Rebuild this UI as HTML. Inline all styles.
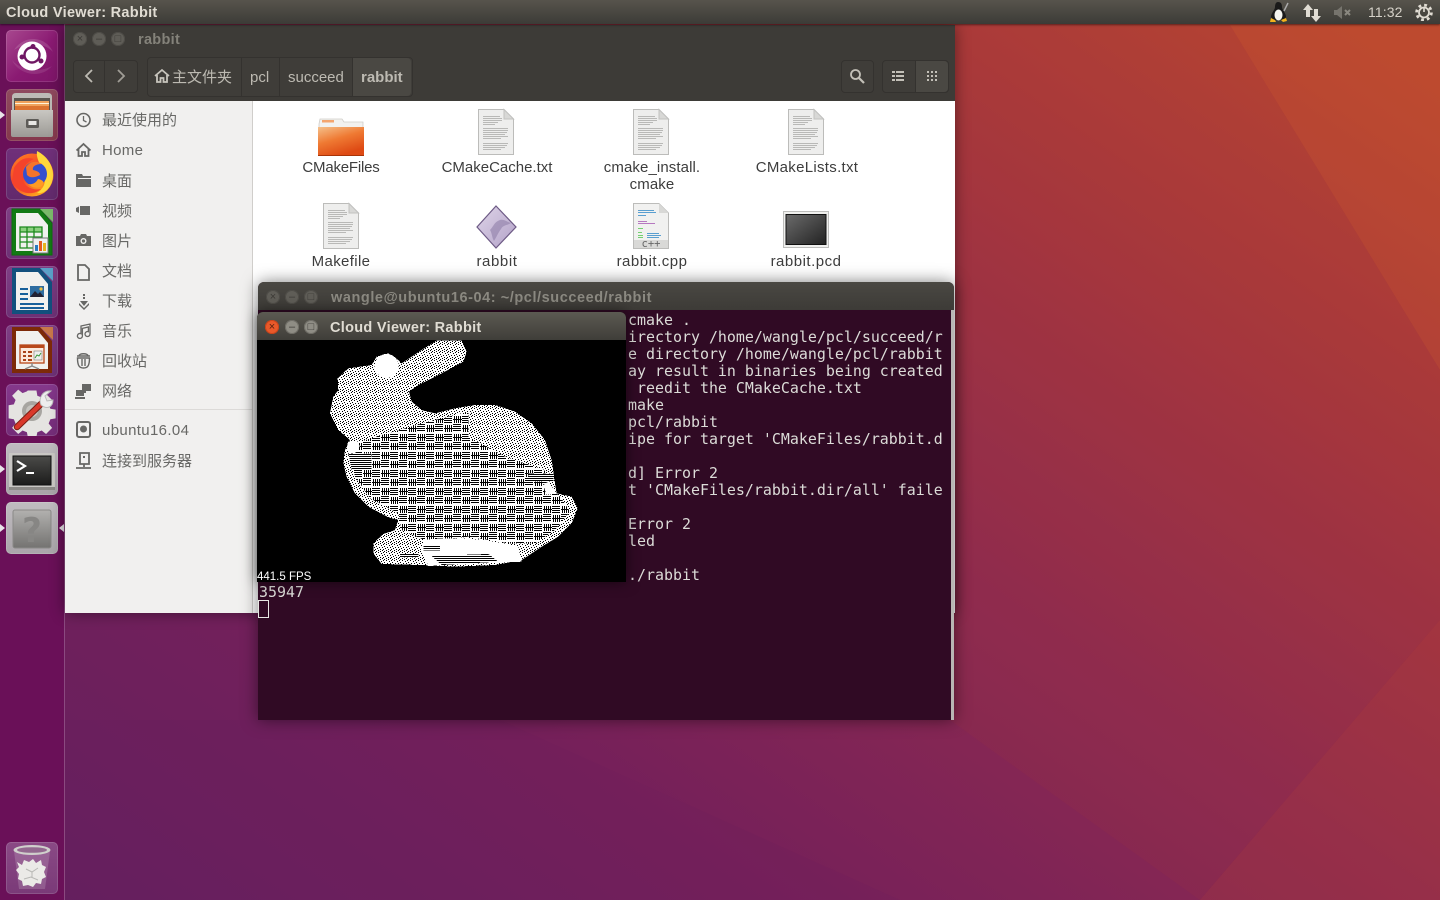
<!DOCTYPE html>
<html><head><meta charset="utf-8"><title>Cloud Viewer: Rabbit</title>
<style>
html,body{margin:0;padding:0;width:1440px;height:900px;overflow:hidden;background:#7a2058}
body{position:relative;font-family:"Liberation Sans","Noto Sans CJK SC",sans-serif}
.a{position:absolute}
.tile{position:absolute;left:6px;width:52px;height:52px;border-radius:5px;overflow:hidden;box-shadow:inset 0 0 0 1px rgba(255,255,255,.13)}
.tile svg{display:block}
.pip{position:absolute;left:0;width:0;height:0;border-top:4px solid transparent;border-bottom:4px solid transparent;border-left:5px solid #e8e4e8}
.wb{position:absolute;width:14px;height:14px;border-radius:50%;background:#5f5d57;box-shadow:inset 0 0 0 1px #4e4c47;color:#3d3b37;font-size:11px;line-height:14px;text-align:center}
.sb{position:absolute;left:102px;font-size:15px;line-height:20px;color:#686866;white-space:nowrap}
.fl{position:absolute;width:150px;text-align:center;font-size:15px;line-height:17px;color:#3d3d3d}
.seg{position:absolute;top:58px;height:40px;line-height:40px;font-size:15px;color:#bdbab2;white-space:nowrap}
pre{margin:0;position:absolute;font-family:"DejaVu Sans Mono","Liberation Mono",monospace;font-size:14.95px;line-height:17px;color:#dcdcd8}
</style></head><body>

<svg class="a" style="left:0;top:0" width="1440" height="900" viewBox="0 0 1440 900">
<defs>
<linearGradient id="wall" x1="0" y1="1" x2="1" y2="0.1">
<stop offset="0" stop-color="#64205f"/><stop offset=".3" stop-color="#75205a"/><stop offset=".55" stop-color="#8d2a50"/><stop offset=".78" stop-color="#a5363e"/><stop offset="1" stop-color="#b94630"/>
</linearGradient>
</defs>
<rect width="1440" height="900" fill="url(#wall)"/>
<polygon points="1230,25 1440,25 1440,370" fill="#cc5a2c" opacity=".22"/>
<polygon points="955,25 1230,25 1440,370 1440,620 1200,900 950,720" fill="#a83a3a" opacity=".12"/>
<polygon points="1440,620 1440,900 1200,900" fill="#b53f34" opacity=".25"/>
<polygon points="65,720 500,720 900,900 65,900" fill="#5f1f63" opacity=".1"/>
</svg>

<!-- launcher -->
<div class="a" style="left:0;top:24px;width:64px;height:876px;background:#6a1058;border-right:1px solid #8b4a80"></div>

<div class="tile" style="top:30px;background:linear-gradient(135deg,#a8488f,#8a1a72 55%,#7d1568)">
<svg width="52" height="52"><path d="M8 20C18 4 40 6 47 22C38 12 20 12 8 20Z" fill="#fff" opacity=".14"/><path d="M6 30C12 44 34 50 46 36C36 42 16 42 6 30Z" fill="#fff" opacity=".1"/>
<circle cx="26" cy="26" r="14.500" fill="#fff"/><circle cx="26" cy="25" r="7.500" fill="none" stroke="#6f1763" stroke-width="2.400"/><circle cx="27" cy="16.500" r="2.500" fill="#6f1763"/><circle cx="16" cy="27" r="2.500" fill="#6f1763"/><circle cx="35" cy="31" r="2.500" fill="#6f1763"/></svg></div>

<div class="pip" style="top:111px"></div>
<div class="tile" style="top:89px;background:linear-gradient(#8f4a5f,#85384c)">
<svg width="52" height="52"><defs><linearGradient id="cab" x1="0" y1="0" x2="0" y2="1"><stop offset="0" stop-color="#c9c7c2"/><stop offset="1" stop-color="#9c9a95"/></linearGradient></defs><path d="M6 8Q6 4 10 4H42Q46 4 46 8V24H6Z" fill="#bdbbb6"/><rect x="8" y="9" width="36" height="13" fill="#5b564f"/><rect x="9" y="12" width="34" height="5" fill="#f0a25c"/><rect x="9" y="14" width="34" height="1" fill="#fff3d9"/><rect x="9" y="17" width="34" height="4" fill="#dc7330"/><path d="M5 21H47V46Q47 48 45 48H7Q5 48 5 46Z" fill="url(#cab)"/><rect x="20" y="30" width="13" height="9" rx="1.500" fill="#5d5b57"/><rect x="22.500" y="32" width="8" height="4" fill="#e8e7e4"/></svg></div>

<div class="tile" style="top:148px;background:linear-gradient(#70307a,#622a6c)">
<svg width="52" height="52"><defs><linearGradient id="fx" x1="0" y1="0" x2=".6" y2="1"><stop offset="0" stop-color="#ff8a1e"/><stop offset=".55" stop-color="#f23f2c"/><stop offset="1" stop-color="#ffa51e"/></linearGradient></defs>
<circle cx="26" cy="27" r="21.500" fill="url(#fx)"/><path d="M31 3C41 8 48 18 47 29C45 42 37 46 31 45C42 38 40 27 35 19C33 14 30 9 31 3Z" fill="#ffd83a"/><circle cx="29" cy="26" r="12" fill="#3350cf"/><path d="M20 19C25 12 32 13 36 16C29 16 26 19 27 22C31 23 34 24 34 27C28 30 24 30 21 27Z" fill="#f5742a"/><path d="M8 20C14 10 21 9 28 11C21 14 16 20 16 27C16 37 25 43 35 41C26 49 11 45 6 33Z" fill="#f4432b"/><path d="M32 31C37 32 39 34 36 38C32 41 26 40 22 36C26 37 30 35 32 31Z" fill="#ff9b23"/></svg></div>

<div class="tile" style="top:207px;background:linear-gradient(#7f3f84,#6d3075)">
<svg width="52" height="52"><path d="M6 2H34L46 16V48H6Z" fill="#127a14" stroke="#0d6d0f" stroke-width="1"/><path d="M34 2H47V15Z" fill="#7ab96a"/><path d="M10 6H32L42 18V44H10Z" fill="#f1f1ee"/><rect x="14" y="20" width="22" height="5" fill="#8bd07e"/><path d="M14 20h22v21h-22zM14 25h22M14 30h22M14 35h22M21 20v21M28 20v21" fill="none" stroke="#1d8a1d" stroke-width="1.300"/><rect x="27" y="31" width="15" height="15" fill="#efefef" stroke="#777"/><rect x="29" y="38" width="3" height="6" fill="#2a7ac0"/><rect x="33" y="34" width="3" height="10" fill="#e55a20"/><rect x="37" y="36" width="3" height="8" fill="#e8b31c"/></svg></div>

<div class="tile" style="top:266px;background:linear-gradient(#7f3f84,#6d3075)">
<svg width="52" height="52"><path d="M6 2H34L46 16V48H6Z" fill="#12507d"/><path d="M34 2H47V15Z" fill="#5aa0c8"/><path d="M10 6H32L42 18V44H10Z" fill="#f1f1ee"/><path d="M14 22h8v2h-8zM14 27h8v2h-8zM14 32h8v2h-8zM14 37h24v2H14zM14 41h24v2H14z" fill="#17609a"/><rect x="24" y="20" width="14" height="11" fill="#2e6da0"/><path d="M24 31l5-6 3 3 2-2 4 5z" fill="#223"/><circle cx="35" cy="23" r="1.600" fill="#f0c040"/></svg></div>

<div class="tile" style="top:325px;background:linear-gradient(#7f3f84,#6d3075)">
<svg width="52" height="52"><path d="M6 2H34L46 16V48H6Z" fill="#7d2a08"/><path d="M34 2H47V15Z" fill="#c8784a"/><path d="M10 6H32L42 18V44H10Z" fill="#f1f1ee"/><rect x="14" y="20" width="24" height="18" fill="#fbe9dc" stroke="#b8481a" stroke-width="1.300"/><rect x="14" y="20" width="24" height="3" fill="#b8481a"/><path d="M17 26h3v2h-3zM22 26h4v2h-4zM17 30h3v2h-3zM22 30h4v2h-4zM17 34h3v2h-3zM22 34h4v2h-4z" fill="#a8431a"/><rect x="28" y="26" width="8" height="9" fill="#eee" stroke="#666" stroke-width=".5"/><path d="M29 33l2-3 2 1 2-3" stroke="#3a9a3a" fill="none"/><path d="M26 38v3M19 44l7-3 7 3" stroke="#888" stroke-width="1.400" fill="none"/></svg></div>

<div class="tile" style="top:384px;background:linear-gradient(#85388c,#742c78)">
<svg width="52" height="52"><path d="M21 4h10l1 6 5 2 5-4 7 7-4 5 2 5 6 1v10l-6 1-2 5 4 5-7 7-5-4-5 2-1 5H21l-1-5-5-2-5 4-7-7 4-5-2-5-6-1V21l6-1 2-5-4-5 7-7 5 4 5-2z" transform="translate(3.500 3) scale(.87)" fill="#e5e4e1"/><circle cx="26" cy="27" r="10" fill="#a7a5a0"/><circle cx="26" cy="27" r="6" fill="#c5c3be"/>
<path d="M11 43L36 19" stroke="#7a1f14" stroke-width="6.500" stroke-linecap="round"/><path d="M11 43L36 19" stroke="#d9382a" stroke-width="4.500" stroke-linecap="round"/><path d="M35 21C32 14 37 6 45 7L39 12L41 17L47 16C47 23 41 26 35 21Z" fill="#eee" stroke="#bbb"/></svg></div>

<div class="pip" style="top:465px"></div>
<div class="tile" style="top:443px;background:linear-gradient(#c0bcc0,#a8a3a8)">
<svg width="52" height="52"><defs><linearGradient id="tm" x1="0" y1="0" x2="0" y2="1"><stop offset="0" stop-color="#4b4b49"/><stop offset="1" stop-color="#1c1c1b"/></linearGradient></defs><rect x="3" y="10" width="46" height="36" rx="1" fill="#c9c7c4"/><rect x="3" y="44" width="46" height="3" fill="#8c8a87"/><rect x="7" y="13" width="38" height="29" fill="url(#tm)" stroke="#111"/><path d="M11 18l8 5-8 5" fill="none" stroke="#fff" stroke-width="2.200"/><rect x="20" y="29" width="8" height="2" fill="#fff"/></svg></div>

<div class="pip" style="top:524px"></div>
<div class="a" style="left:59px;top:524px;width:0;height:0;border-top:4px solid transparent;border-bottom:4px solid transparent;border-right:5px solid #e8e4e8"></div>
<div class="tile" style="top:502px;background:linear-gradient(#c0bcc0,#aaa5aa)">
<svg width="52" height="52"><defs><linearGradient id="hp" x1="0" y1="0" x2="0" y2="1"><stop offset="0" stop-color="#b2b1af"/><stop offset="1" stop-color="#747371"/></linearGradient></defs><rect x="7" y="8" width="38" height="38" rx="2" fill="url(#hp)" stroke="#8a8987"/><text x="26" y="40" text-anchor="middle" font-family="DejaVu Sans,sans-serif" font-size="34" font-weight="bold" fill="#878684">?</text></svg></div>

<div class="tile" style="top:842px;background:linear-gradient(#8a4a85,#7a3a78)">
<svg width="52" height="52"><path d="M8 9L13 47H39L44 9Z" fill="#fff" opacity=".16"/><path d="M11 20l5 3 2-5 5 2 4-3 3 4 5-3 1 5 4 2-2 5 2 5-4 2-1 5-5-1-3 4-5-2-5 1-1-5-4-2 1-5-3-4 3-3z" fill="#ebeae7"/><path d="M20 27l6 3 6-4M18 37l7-2 7 3M26 30v6" stroke="#b8b8b5" fill="none"/><ellipse cx="26" cy="8" rx="18.500" ry="5" fill="#d0d0cc"/><ellipse cx="26" cy="8" rx="15" ry="2.800" fill="#93688f"/></svg></div>

<!-- files window -->
<div class="a" style="left:65px;top:25px;width:890px;height:588px;background:#fff;box-shadow:0 0 14px rgba(0,0,0,.45)">
  <div class="a" style="left:0;top:0;width:890px;height:76px;background:#3d3b37"></div>
  <div class="a" style="left:0;top:76px;width:187px;height:512px;background:#f1f0ef;border-right:1px solid #d0cecb"></div>
  <div class="a" style="left:0;top:384px;width:187px;height:1px;background:#dcdad8"></div>
</div>
<div class="wb" style="left:73px;top:32px">×</div><div class="wb" style="left:92px;top:32px">–</div><div class="wb" style="left:111px;top:32px">□</div>
<div class="a" style="left:138px;top:31px;font-size:14.500px;font-weight:bold;line-height:18px;color:#84827a;letter-spacing:.3px">rabbit</div>

<div class="a" style="left:73px;top:60px;width:63px;height:31px;border:1px solid #34322f;border-radius:4px;background:#3f3d39"></div>
<div class="a" style="left:104px;top:61px;width:1px;height:31px;background:#34322f"></div>
<svg class="a" style="left:80px;top:66px" width="50" height="20"><path d="M12 4L6 10L12 16" fill="none" stroke="#bdbab2" stroke-width="1.800"/><path d="M38 4L44 10L38 16" fill="none" stroke="#a09d96" stroke-width="1.800"/></svg>

<div class="a" style="left:147px;top:57px;width:264px;height:38px;border:1px solid #34322f;border-radius:4px;background:#3f3d39"></div>
<div class="a" style="left:352px;top:58px;width:59px;height:38px;background:#4a4843;border-radius:0 4px 4px 0"></div>
<div class="a" style="left:241px;top:58px;width:1px;height:38px;background:#34322f"></div>
<div class="a" style="left:279px;top:58px;width:1px;height:38px;background:#34322f"></div>
<div class="a" style="left:352px;top:58px;width:1px;height:38px;background:#34322f"></div>
<svg class="a" style="left:154px;top:68px" width="16" height="16"><path d="M1 8L8 2L15 8M3 7V14H6.500V10H9.500V14H13V7" fill="none" stroke="#c8c5bd" stroke-width="1.800"/></svg>
<div class="seg" style="left:172px">主文件夹</div>
<div class="seg" style="left:250px">pcl</div>
<div class="seg" style="left:288px">succeed</div>
<div class="seg" style="left:361px;font-weight:bold">rabbit</div>

<div class="a" style="left:841px;top:60px;width:31px;height:31px;border:1px solid #34322f;border-radius:4px;background:#3f3d39"></div>
<svg class="a" style="left:849px;top:68px" width="16" height="16"><circle cx="6.500" cy="6.500" r="4.500" fill="none" stroke="#c3c0b8" stroke-width="1.800"/><path d="M10 10L15 15" stroke="#c3c0b8" stroke-width="2.200"/></svg>
<div class="a" style="left:882px;top:60px;width:65px;height:31px;border:1px solid #34322f;border-radius:4px;background:#3f3d39"></div>
<div class="a" style="left:915px;top:61px;width:33px;height:31px;background:#4a4843;border-left:1px solid #34322f;border-radius:0 4px 4px 0;box-sizing:border-box"></div>
<svg class="a" style="left:892px;top:71px" width="12" height="11"><path d="M0 0h3v2H0zM4 0h8v2H4zM0 4h3v2H0zM4 4h8v2H4zM0 8h3v2H0zM4 8h8v2H4z" fill="#c3c0b8"/></svg>
<svg class="a" style="left:927px;top:71px" width="11" height="11"><path d="M0 0h2v2H0zM4 0h2v2H4zM8 0h2v2H8zM0 4h2v2H0zM4 4h2v2H4zM8 4h2v2H8zM0 8h2v2H0zM4 8h2v2H4zM8 8h2v2H8z" fill="#c3c0b8"/></svg>

<!-- sidebar -->
<svg class="a" style="left:75px;top:110px" width="18" height="300" fill="#676765">
<circle cx="8.500" cy="10" r="6.500" fill="none" stroke="#676765" stroke-width="1.600"/><path d="M8.500 6v4.500l3 1.500" fill="none" stroke="#676765" stroke-width="1.300"/>
<path d="M1.500 40.500L8.500 34L15.500 40.500M3.500 39V46H7V42H10V46H13.500V39" fill="none" stroke="#676765" stroke-width="1.800"/>
<path d="M1 64h6l1 2h8v11H1z"/><rect x="3" y="68" width="13" height="1" fill="#f1f0ef"/>
<path d="M1 98l3-1.500V103L1 101.500zM5 96h10v9H5z"/>
<path d="M1 126h4l1-2h5l1 2h4v10H1z"/><circle cx="8.500" cy="131" r="3" fill="#f1f0ef"/><circle cx="8.500" cy="131" r="1.600"/>
<path d="M3 155h7l4 4v11H3z" fill="none" stroke="#676765" stroke-width="1.800"/>
<path d="M8 184h2v2H8zM8 187h2v2H8zM5 191h8l-4 5z"/><path d="M4 193l5 5 5-5v2l-5 5-5-5z"/>
<path d="M6 216l9-2v10a2.500 2.500 0 1 1-1.600-2.300V217l-6 1.400v7.600a2.500 2.500 0 1 1-1.400-2.300z" fill="none" stroke="#676765" stroke-width="1.300"/>
<path d="M2 246h13M4 246c0-3 9-3 9 0M2.500 248c0 8 2 10 6 10s6-2 6-10z M7 249v7M10 249v7" fill="none" stroke="#676765" stroke-width="1.400"/>
<path d="M7 274h9v7h-5v2H7zM1 280h8v6H1zM0 287h10v2H0z"/>
</svg>
<svg class="a" style="left:75px;top:420px" width="18" height="52" fill="#676765"><rect x="2" y="2" width="13" height="15" rx="2" fill="none" stroke="#676765" stroke-width="2"/><circle cx="8.500" cy="9" r="3.500"/><path d="M5 33h9v11H5z" fill="none" stroke="#676765" stroke-width="1.800"/><rect x="8" y="36" width="2" height="2"/><path d="M9 44v3M1 48h15" stroke="#676765" stroke-width="1.800"/></svg>
<div class="sb" style="top:111px">最近使用的</div>
<div class="sb" style="top:140px;letter-spacing:.3px;margin-top:1px">Home</div>
<div class="sb" style="top:172px">桌面</div>
<div class="sb" style="top:202px">视频</div>
<div class="sb" style="top:232px">图片</div>
<div class="sb" style="top:262px">文档</div>
<div class="sb" style="top:292px">下载</div>
<div class="sb" style="top:322px">音乐</div>
<div class="sb" style="top:352px">回收站</div>
<div class="sb" style="top:382px">网络</div>
<div class="sb" style="top:421px;letter-spacing:.35px">ubuntu16.04</div>
<div class="sb" style="top:452px">连接到服务器</div>

<!-- file icons -->
<svg class="a" style="left:255px;top:101px" width="700" height="160">
<defs>
<linearGradient id="fo" x1="0" y1="0" x2=".5" y2="1"><stop offset="0" stop-color="#f5c08a"/><stop offset=".5" stop-color="#ef7a33"/><stop offset="1" stop-color="#de4a14"/></linearGradient>
<g id="doc"><path d="M0.500 0.500H26L35.500 10V45.500H0.500Z" fill="#eeeeed" stroke="#bcbcba"/><path d="M26 0.500V10H35.500Z" fill="#d8d8d6" stroke="#c2c2c0"/>
<path d="M5 7.500h17M5 9.500h19M5 11.500h19M5 13.500h15M5 15.500h12M5 19.500h25M5 21.500h25M5 23.500h24M5 25.500h22M5 27.500h25M5 29.500h18M5 34.500h25M5 36.500h24M5 38.500h22M5 40.500h18" stroke="#b9b9b7" stroke-width="1"/></g>
</defs>
<path d="M64 23l1-5h22l2 3h19v6H64z" fill="#f2f1ef" stroke="#cfcdc9" stroke-width=".8"/><rect x="67" y="19" width="12" height="2.500" fill="#f4a56e"/>
<path d="M63 26H109V54H63Z" fill="url(#fo)"/><path d="M63 54H109V55H63Z" fill="#a83408"/>
<use href="#doc" x="223" y="8"/><use href="#doc" x="378" y="8"/><use href="#doc" x="533" y="8"/><use href="#doc" x="68" y="102"/>
</svg>
<svg class="a" style="left:476px;top:205px" width="42" height="44"><defs><linearGradient id="ex" x1="0" y1="0" x2="1" y2="1"><stop offset="0" stop-color="#ded4e8"/><stop offset="1" stop-color="#b3a2c8"/></linearGradient></defs><path d="M20 1L40 22L20 43L1 22Z" fill="url(#ex)" stroke="#6d5a85" stroke-width="1.200"/><path d="M14 25c4-4 4-8 10-10 4-1 7 2 11 3-5 3-8 2-10 6-3 4-5 9-7 12-2-3-2-8-4-11z" fill="#8f7ea8" opacity=".6"/></svg>
<svg class="a" style="left:633px;top:203px" width="37" height="47"><path d="M0.500 0.500H26L35.500 10V45.500H0.500Z" fill="#f1f1f0" stroke="#bcbcba"/><path d="M26 0.500V10H35.500Z" fill="#d8d8d6"/><path d="M5 7.500h16M5 9.500h18M5 12.500h8" stroke="#5a9fd0"/><path d="M5 18.500h9M5 20.500h17" stroke="#b678c0"/><path d="M5 25.500h5M5 29.500h4M5 32.500h5M5 34.500h5" stroke="#74d070"/><path d="M14 30.500h12M14 32.500h14M14 34.500h12" stroke="#5a9fd0"/><rect x="1" y="37" width="34" height="8" fill="#d9d9d7"/><text x="18" y="44" text-anchor="middle" font-family="DejaVu Sans Mono,monospace" font-size="10.500" fill="#666">c++</text></svg>
<svg class="a" style="left:783px;top:211px" width="47" height="38"><defs><linearGradient id="pc" x1="0" y1="0" x2="1" y2="1"><stop offset="0" stop-color="#6b6b6b"/><stop offset="1" stop-color="#222"/></linearGradient></defs><rect x=".5" y=".5" width="45" height="36" fill="#f0f0ee" stroke="#bdbdbb"/><rect x="3" y="3.500" width="40" height="30" fill="url(#pc)" stroke="#111"/></svg>

<div class="fl" style="left:266px;top:159px;letter-spacing:-.2px">CMakeFiles</div>
<div class="fl" style="left:422px;top:159px">CMakeCache.txt</div>
<div class="fl" style="left:577px;top:159px;letter-spacing:.1px">cmake_install.<br>cmake</div>
<div class="fl" style="left:732px;top:159px;letter-spacing:.3px">CMakeLists.txt</div>
<div class="fl" style="left:266px;top:253px;letter-spacing:.35px">Makefile</div>
<div class="fl" style="left:422px;top:253px;letter-spacing:.6px">rabbit</div>
<div class="fl" style="left:577px;top:253px;letter-spacing:.5px">rabbit.cpp</div>
<div class="fl" style="left:731px;top:253px;letter-spacing:.5px">rabbit.pcd</div>

<!-- terminal -->
<div class="a" style="left:258px;top:282px;width:696px;height:438px;background:#300a24;border-radius:6px 6px 0 0;box-shadow:0 0 16px rgba(0,0,0,.5)"></div>
<div class="a" style="left:258px;top:282px;width:696px;height:28px;background:linear-gradient(#4a4843,#3d3b37);border-radius:6px 6px 0 0"></div>
<div class="a" style="left:951px;top:310px;width:3px;height:410px;background:#b9b6b4"></div>
<div class="wb" style="left:266px;top:290px">×</div><div class="wb" style="left:285px;top:290px">–</div><div class="wb" style="left:304px;top:290px">□</div>
<div class="a" style="left:331px;top:289px;font-size:14.500px;font-weight:bold;line-height:18px;color:#8b8981;white-space:nowrap;letter-spacing:.57px">wangle@ubuntu16-04: ~/pcl/succeed/rabbit</div>
<pre style="left:628px;top:312px">cmake .
irectory /home/wangle/pcl/succeed/r
e directory /home/wangle/pcl/rabbit
ay result in binaries being created
 reedit the CMakeCache.txt
make
pcl/rabbit
ipe for target 'CMakeFiles/rabbit.d

d] Error 2
t 'CMakeFiles/rabbit.dir/all' faile

Error 2
led

./rabbit</pre>
<pre style="left:259px;top:584px">35947</pre>
<div class="a" style="left:258px;top:600px;width:9px;height:16px;border:1px solid #e8e8e4"></div>

<!-- viewer -->
<div class="a" style="left:257px;top:312px;width:369px;height:270px;background:#000;border-radius:6px 6px 0 0;box-shadow:0 0 14px rgba(0,0,0,.55)"></div>
<div class="a" style="left:257px;top:312px;width:369px;height:28px;background:linear-gradient(#5c5a52,#3f3e39);border-radius:6px 6px 0 0"></div>
<div class="wb" style="left:265px;top:320px;background:#e9592a;box-shadow:inset 0 0 0 1px #c8431a;color:#5a2210">×</div>
<div class="wb" style="left:285px;top:320px;background:#8f8d85;box-shadow:inset 0 0 0 1px #6f6d66">–</div>
<div class="wb" style="left:304px;top:320px;background:#8f8d85;box-shadow:inset 0 0 0 1px #6f6d66">□</div>
<div class="a" style="left:330px;top:319px;font-size:14.500px;font-weight:bold;line-height:18px;color:#e0dcd3;white-space:nowrap;letter-spacing:.3px">Cloud Viewer: Rabbit</div>

<svg class="a" style="left:255px;top:280px" width="380" height="345" viewBox="0 0 1140 1035" shape-rendering="crispEdges">
<defs>
<pattern id="dots" width="8" height="8" patternUnits="userSpaceOnUse" patternTransform="scale(3)"><rect width="8" height="8" fill="#fff"/><path d="M0 0h1v1H0zM3 0h1v1H3zM6 1h1v1H6zM1 2h1v1H1zM4 3h1v1H4zM7 3h1v1H7zM2 4h1v1H2zM5 5h1v1H5zM0 5h1v1H0zM3 6h1v1H3zM7 6h1v1H7zM1 7h1v1H1zM5 7h1v1H5z" fill="#000"/></pattern>
<pattern id="maze" width="18" height="18" patternUnits="userSpaceOnUse" patternTransform="scale(3)"><rect width="18" height="18" fill="#fff"/><path d="M0 0h8v1H0zM0 2h8v1H0zM0 4h8v1H0zM0 6h8v1H0zM10 1h1v7h-1zM12 1h1v7h-1zM14 1h1v7h-1zM16 1h1v7h-1zM9 4h9v1H9zM1 10h1v7H1zM3 10h1v7H3zM5 10h1v7H5zM7 10h1v7H7zM0 13h9v1H0zM9 10h8v1H9zM9 12h8v1H9zM9 14h8v1H9zM9 16h8v1H9z" fill="#000"/></pattern>
<pattern id="lines" width="2" height="2" patternUnits="userSpaceOnUse" patternTransform="scale(3)"><rect width="2" height="2" fill="#fff"/><rect width="2" height="1" fill="#000"/></pattern>
</defs>
<path d="M440 250L500 210L545 182L620 182L635 215L625 245L560 280L490 315L462 335L470 365L500 390L540 400L600 385L660 375L720 375L780 395L830 430L870 480L890 540L900 610L905 640L950 650L968 685L950 730L910 770L860 800L800 840L720 855L600 860L500 855L380 852L355 820L355 790L385 762L420 750L430 720L400 712L340 680L300 640L275 590L265 550L270 510L285 480L250 450L225 400L235 350L250 330L248 295L280 265L350 255L365 230L400 220L430 240Z" fill="url(#dots)"/>
<circle cx="395" cy="258" r="36" fill="#fff"/>
<path d="M300 490L380 465L520 425L620 400L700 395L780 430L850 510L880 610L930 670L945 695L900 750L840 790L760 790L640 770L520 785L440 750L430 700L345 655L300 590L285 540Z" fill="url(#maze)"/>
<path d="M640 400L720 385L800 425L860 510L870 570L750 530L640 470Z" fill="url(#dots)"/>
<path d="M280 485a18 22 0 1 0 30 0zM880 605l25 35-30 5-10-30z" fill="#fff"/>
<path d="M280 520h70v50h-60zM820 580h75v25h-75z" fill="url(#lines)"/>
<path d="M505 780C580 770 700 775 790 800L800 845L520 858L500 810Z" fill="#fff"/>
<path d="M530 828L700 822L730 845L560 855Z" fill="url(#lines)"/>
<path d="M505 798h50v14h-50zM435 822h55v10h-55z" fill="url(#lines)"/>
</svg>
<div class="a" style="left:257px;top:571px;font-size:11.500px;line-height:13px;color:#fff;white-space:nowrap">441.5 FPS</div>

<!-- top panel -->
<div class="a" style="left:0;top:0;width:1440px;height:24px;background:linear-gradient(#57544c,#3c3b37);box-shadow:0 1px 2px rgba(0,0,0,.5)"></div>
<div class="a" style="left:6px;top:4px;font-size:14.500px;font-weight:bold;line-height:18px;color:#e0dcd3;white-space:nowrap;letter-spacing:.3px">Cloud Viewer: Rabbit</div>
<svg class="a" style="left:1267px;top:1px" width="24" height="22"><path d="M11 1c3 0 4 2 4 5 0 3 4 6 4 10l-2 3H6l-2-3c0-4 4-7 4-10 0-3 1-5 3-5z" fill="#1a1a1a"/><ellipse cx="11.500" cy="14" rx="4" ry="5.500" fill="#f5f5f0"/><path d="M4 17l4 2 1 2H3zM14 19l5-2 1 3-4 1z" fill="#f2b21c"/><path d="M17 10l4-8" stroke="#aaa" stroke-width="1.500"/></svg>
<svg class="a" style="left:1303px;top:4px" width="18" height="18" fill="#e0dcd3"><path d="M5 0L10 6H7V13H3V6H0Z"/><path d="M13 18L8 12H11V5H15V12H18Z"/></svg>
<svg class="a" style="left:1334px;top:6px" width="20" height="13" fill="#76746d"><path d="M0 4h3l5-4v13l-5-4H0z"/><path d="M11 4l5 5M16 4l-5 5" stroke="#8a8880" stroke-width="2"/></svg>
<div class="a" style="left:1368px;top:4px;font-size:14px;line-height:17px;color:#d5d1c8;white-space:nowrap;letter-spacing:.1px">11:32</div>
<svg class="a" style="left:1415px;top:3px" width="18" height="18"><circle cx="9" cy="9.500" r="5" fill="none" stroke="#e0dcd3" stroke-width="1.800"/><circle cx="9" cy="9.500" r="7.400" fill="none" stroke="#e0dcd3" stroke-width="2.800" stroke-dasharray="2.800 3"/><path d="M9 4.500v4.500" stroke="#e0dcd3" stroke-width="1.600"/></svg>
</body></html>
